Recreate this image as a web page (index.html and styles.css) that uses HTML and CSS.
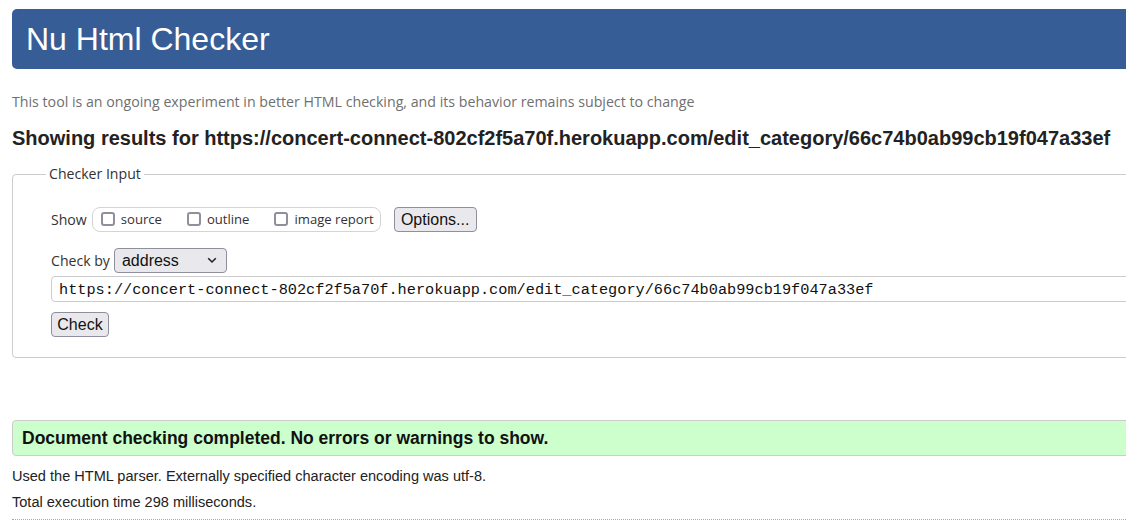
FILE: index.html
```html
<!DOCTYPE html>
<html lang="en">
<head>
<meta charset="utf-8">
<title>Nu Html Checker</title>
<link rel="stylesheet" href="styles.css">
</head>
<body>
<div class="page">
  <h1 class="header">Nu Html Checker</h1>
  <p class="intro">This tool is an ongoing experiment in better HTML checking, and its behavior remains subject to change</p>
  <h2 class="results-title">Showing results for https://concert-connect-802cf2f5a70f.herokuapp.com/edit_category/66c74b0ab99cb19f047a33ef</h2>
  <fieldset class="input-box">
    <legend class="legend">Checker Input</legend>
    <div class="show-row">
      <span class="label">Show</span>
      <span class="show-group">
        <label class="opt"><input type="checkbox" class="cb"><span>source</span></label>
        <label class="opt"><input type="checkbox" class="cb"><span>outline</span></label>
        <label class="opt"><input type="checkbox" class="cb"><span>image report</span></label>
      </span>
      <button class="btn options">Options...</button>
    </div>
    <div class="by-row">
      <span class="label">Check by</span>
      <span class="select-wrap">
        <select class="select"><option>address</option></select>
        <svg class="chev" width="10" height="7" viewBox="0 0 10 7"><path d="M1.2 1.3 L5 5 L8.8 1.3" fill="none" stroke="#222" stroke-width="1.6"/></svg>
      </span>
    </div>
    <input class="url" type="text" value="https://concert-connect-802cf2f5a70f.herokuapp.com/edit_category/66c74b0ab99cb19f047a33ef">
    <div class="check-row"><button class="btn check">Check</button></div>
  </fieldset>
  <div class="success">Document checking completed. No errors or warnings to show.</div>
  <p class="info first">Used the HTML parser. Externally specified character encoding was utf-8.</p>
  <p class="info">Total execution time 298 milliseconds.</p>
  <div class="dotted"></div>
</div>
</body>
</html>
```

FILE: styles.css
```css
html, body {
  margin: 0;
  padding: 0;
  overflow: hidden;
  background: #fff;
}
body {
  font-family: "Liberation Sans", Arial, sans-serif;
  color: #222;
}
.page {
  width: 1150px;
  padding: 9px 0 0 12px;
}
.header {
  margin: 0;
  height: 60px;
  line-height: 60px;
  padding-left: 14px;
  background: #365d95;
  color: #fff;
  font-weight: normal;
  font-size: 32px;
  border-radius: 5px 0 0 5px;
}
.intro {
  margin: 23px 0 0 0;
  line-height: 20px;
  font-family: "Open Sans", sans-serif;
  font-size: 14.2px;
  color: #6f6f6f;
}
.results-title {
  margin: 14px 0 0 0;
  line-height: 24px;
  font-size: 20px;
  font-weight: bold;
  color: #222;
  white-space: nowrap;
}
.input-box {
  margin: 14px 0 0 0;
  padding: 0 0 20px 38px;
  border: 1px solid #ccc;
  border-radius: 4px;
  min-width: 0;
}
.legend {
  padding: 0 3px;
  margin-left: -5px;
  line-height: 20px;
  font-family: "Open Sans", sans-serif;
  font-size: 14.1px;
  color: #333;
}
.label {
  font-family: "Open Sans", sans-serif;
  font-size: 14.1px;
  color: #333;
}
.show-row {
  margin-top: 22px;
  display: flex;
  align-items: center;
  height: 26px;
}
.show-group {
  display: flex;
  align-items: center;
  margin-left: 5px;
  height: 23px;
  padding: 0 6px 0 8px;
  border: 1px solid #d4d4d4;
  border-radius: 8px;
}
.opt {
  display: flex;
  align-items: center;
  margin-right: 25px;
  font-family: "Open Sans", sans-serif;
  font-size: 13.1px;
  color: #333;
}
.opt:last-child {
  margin-right: 0;
}
.cb {
  appearance: none;
  -webkit-appearance: none;
  margin: 0 6px 0 0;
  width: 14px;
  height: 14px;
  border: 2px solid #8f8f9d;
  border-radius: 3px;
  background: #fff;
}
.btn {
  font-family: "Liberation Sans", Arial, sans-serif;
  font-size: 16px;
  color: #111;
  background: #e9e9ed;
  border: 1px solid #8f8f9d;
  border-radius: 4px;
  padding: 0 5px;
  height: 25px;
  line-height: 23px;
}
.options {
  margin-left: 13px;
  width: 83px;
}
.by-row {
  margin-top: 16px;
  display: flex;
  align-items: center;
  height: 25px;
}
.select-wrap {
  position: relative;
  margin-left: 4px;
  display: flex;
}
.select {
  appearance: none;
  -webkit-appearance: none;
  width: 113px;
  height: 25px;
  padding: 0 0 0 7px;
  font-family: "Liberation Sans", Arial, sans-serif;
  font-size: 16px;
  color: #111;
  background: #e9e9ed;
  border: 1px solid #8f8f9d;
  border-radius: 4px;
}
.chev {
  position: absolute;
  right: 10px;
  top: 9px;
}
.url {
  display: block;
  margin-top: 3px;
  width: 1100px;
  height: 26px;
  box-sizing: border-box;
  padding: 2px 7px 0 7px;
  font-family: "Liberation Mono", "DejaVu Sans Mono", monospace;
  font-size: 15.25px;
  color: #111;
  border: 1px solid #ccc;
  border-radius: 4px;
  outline: none;
}
.check-row {
  margin-top: 10px;
  display: flex;
}
.check {
  width: 58px;
}
.success {
  margin-top: 62px;
  height: 36px;
  box-sizing: border-box;
  line-height: 34px;
  padding-left: 9px;
  background: #ccffcc;
  border: 1px solid #ccc;
  border-radius: 4px 0 0 4px;
  font-weight: bold;
  font-size: 17.5px;
  color: #111;
}
.info {
  margin: 0;
  line-height: 26px;
  font-size: 14.55px;
  color: #222;
}
.info.first {
  margin-top: 7px;
}
.dotted {
  margin-top: 4px;
  border-top: 1px dotted #aaa;
}
```
